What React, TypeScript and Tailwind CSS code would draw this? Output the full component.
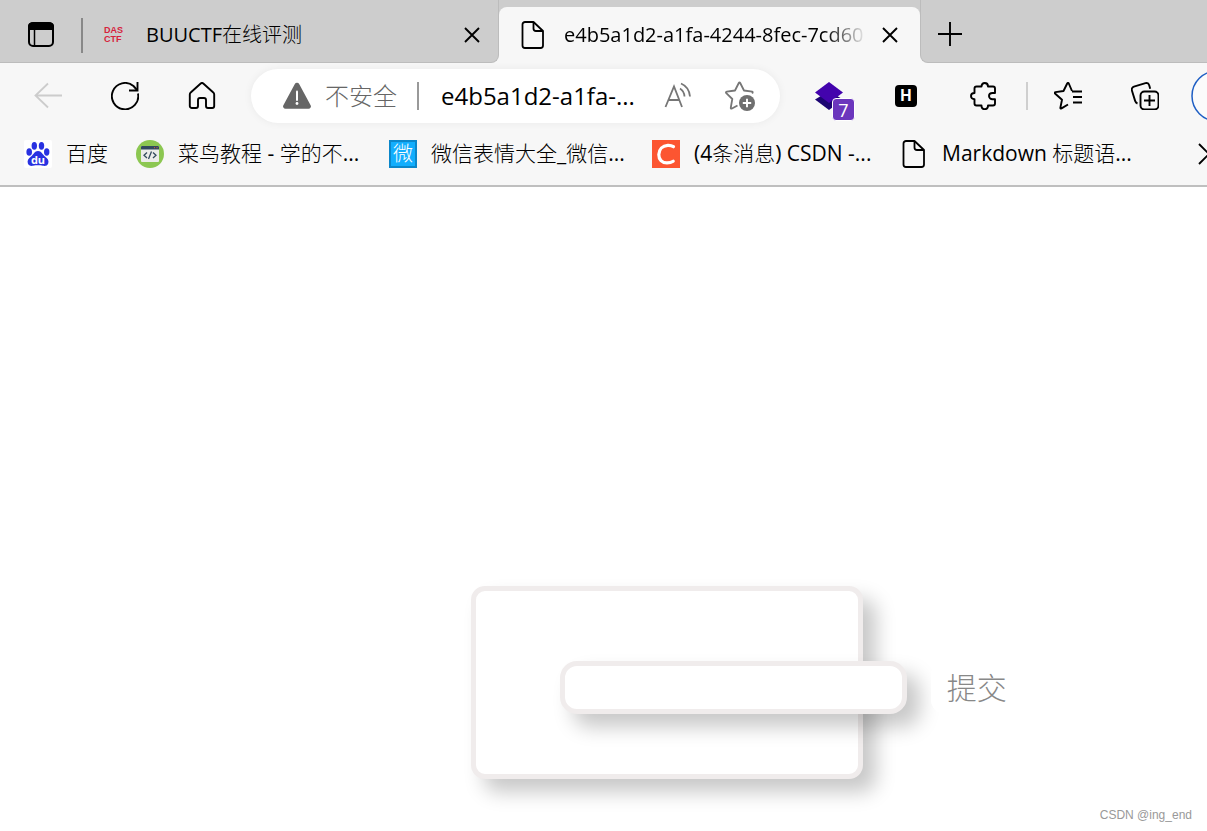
import React from 'react';

function TabActionsIcon() {
  return (
    <svg className="h-7 w-7" viewBox="0 0 28 28" fill="none">
      <rect x="2" y="2" width="24" height="23" rx="4" stroke="black" strokeWidth="2" />
      <path d="M1 9V5.500a4 4 0 0 1 4-4h18a4 4 0 0 1 4 4V9Z" fill="black" />
      <path d="M7.500 9v16" stroke="black" strokeWidth="1.500" />
    </svg>
  );
}

function PageIcon() {
  return (
    <svg className="h-7 w-7 shrink-0" viewBox="0 0 28 28" fill="none" stroke="black" strokeWidth="1.800" strokeLinejoin="round">
      <path d="M6 1h8.500L24 10v14.500a2.500 2.500 0 0 1-2.500 2.500h-15.500a2.500 2.500 0 0 1-2.500-2.500V3.500A2.500 2.500 0 0 1 6 1Z" />
      <path d="M14.500 1v6.500a2.500 2.500 0 0 0 2.500 2.500h7" />
    </svg>
  );
}

function CloseIcon() {
  return (
    <svg className="h-4 w-4" viewBox="0 0 16 16" stroke="black" strokeWidth="1.900">
      <path d="M1 1l14 14M15 1L1 15" />
    </svg>
  );
}

function BackIcon() {
  return (
    <svg className="h-7 w-7" viewBox="0 0 28 28" fill="none" stroke="#cccccc" strokeWidth="1.800">
      <path d="M14 1.500L1.500 13.500 14 25.500M1.500 13.500H28" />
    </svg>
  );
}

function ReloadIcon() {
  return (
    <svg className="h-7 w-7" viewBox="0 0 28 28" fill="none" stroke="black" strokeWidth="1.900">
      <path d="M27 11.500A13.200 13.200 0 1 1 22.500 4L26 8" />
      <path d="M26.500 0v8.500H18" />
    </svg>
  );
}

function HomeIcon() {
  return (
    <svg className="h-7 w-7" viewBox="0 0 28 28" fill="none" stroke="black" strokeWidth="1.900" strokeLinejoin="round">
      <path d="M12.700 1.500a2 2 0 0 1 2.600 0l10 9a2.500 2.500 0 0 1 .9 1.900V24a2 2 0 0 1-2 2H20a2 2 0 0 1-2-2v-6a2 2 0 0 0-2-2h-4a2 2 0 0 0-2 2v6a2 2 0 0 1-2 2H3.800a2 2 0 0 1-2-2V12.400a2.500 2.500 0 0 1 .9-1.900Z" />
    </svg>
  );
}

function WarningIcon() {
  return (
    <svg className="h-7 w-7 shrink-0" viewBox="0 0 28 28">
      <path d="M11.700 2.200a2.600 2.600 0 0 1 4.600 0l11.300 21a2.400 2.400 0 0 1-2.100 3.600h-23a2.400 2.400 0 0 1-2.100-3.600Z" fill="#666666" />
      <path d="M14 9.500v8.500" stroke="white" strokeWidth="2" strokeLinecap="round" />
      <circle cx="14" cy="21.500" r="1.400" fill="white" />
    </svg>
  );
}

function ReadAloudIcon() {
  return (
    <svg className="h-7 w-7" viewBox="0 0 28 28" fill="none" stroke="#767676" strokeWidth="1.800">
      <path d="M1.500 25L10 4.500 18 25M4.500 18h11" />
      <path d="M16 6.500c2.800 1.800 4.300 4.200 4.500 8" />
      <path d="M17 1.500c5.300 2.300 8.500 7 9 13" />
    </svg>
  );
}

function AddFavoriteIcon() {
  return (
    <svg className="h-8 w-8" viewBox="0 0 32 32" fill="none">
      <path
        d="M13.500 25.500L8 28.500q-1.500.7-1.200-1l1.500-8.500-6-5.800q-1-1.200.5-1.500l8.200-1.200L14.800 3q.7-1.300 1.400 0L20 10.500l8.200 1.200q1 .3 0 1.800"
        stroke="#767676"
        strokeWidth="1.800"
        strokeLinejoin="round"
      />
      <circle cx="23" cy="23" r="8" fill="#6f6f6f" />
      <path d="M23 18.800v8.400M18.800 23h8.400" stroke="white" strokeWidth="1.900" />
    </svg>
  );
}

function LayersIcon() {
  return (
    <svg className="h-7 w-7" viewBox="0 0 28 28">
      <path d="M0 17.500L14 9l14 8.500L14 28Z" fill="#1c0473" />
      <path d="M14 0l14 10.500L14 21 0 10.500Z" fill="#4303ad" />
    </svg>
  );
}

function PuzzleIcon() {
  return (
    <svg className="h-7 w-7" viewBox="0 0 28 28" fill="none" stroke="black" strokeWidth="1.900" strokeLinejoin="round">
      <path d="M6.500 4.500h5c0-2 1.200-3.500 3.200-3.500s3.300 1.500 3.300 3.500h5a2 2 0 0 1 2 2V11h-2.500c-2 0-3.500 1.300-3.500 3s1.500 3.200 3.500 3.200H25v4.300a2 2 0 0 1-2 2h-5c0 2.200-1.300 3.700-3.300 3.700s-3.200-1.500-3.200-3.700h-5a2 2 0 0 1-2-2v-4.300C2.400 17.200 1 16 1 14s1.400-3 3.500-3V6.500a2 2 0 0 1 2-2Z" />
    </svg>
  );
}

function FavoritesIcon() {
  return (
    <svg className="h-7 w-7" viewBox="0 0 28 28" fill="none" stroke="black" strokeWidth="1.900" strokeLinejoin="round">
      <path d="M14 22.500l-6.500 3.900q-1.300.6-1.100-.8l1.600-7.900L1 11.500q-.8-1.100.5-1.400l8-1.100 3.700-7.500q.8-1.200 1.600 0L18 9" />
      <path d="M18 9.500h10M19 15H28M19 20.500H28" />
    </svg>
  );
}

function CollectionsIcon() {
  return (
    <svg className="h-7 w-7" viewBox="0 0 28 28" fill="none" stroke="black" strokeWidth="1.900">
      <rect x="9.500" y="9.500" width="18" height="18" rx="4" />
      <path d="M18.500 13v11M13 18.500h11" />
      <path d="M6.500 21.500a3.500 3.500 0 0 1-2.300-2.400L.9 8.500a3 3 0 0 1 2-3.800L14.500 1.200a3 3 0 0 1 3.700 2l1 3.500" />
    </svg>
  );
}

function BaiduIcon() {
  return (
    <svg className="h-7 w-7 shrink-0" viewBox="0 0 28 28">
      <rect width="28" height="28" rx="2" fill="white" />
      <g fill="#2932e1">
        <ellipse cx="5.200" cy="12" rx="2.800" ry="3.800" />
        <ellipse cx="10.300" cy="5.800" rx="2.700" ry="3.900" />
        <ellipse cx="17.500" cy="5.800" rx="2.700" ry="3.900" />
        <ellipse cx="22.700" cy="12" rx="2.700" ry="3.700" />
        <path d="M14 11c3.500 0 4.500 3.500 7 5.600 2.600 2.200 4.100 3.800 3.300 6.600-.8 2.600-3 3-5.300 2.600-3.400-.6-6.600-.6-10 0-2.300.4-4.500-.2-5.200-2.600-.8-2.900.7-4.400 3.200-6.600C9.500 14.500 10.500 11 14 11Z" />
      </g>
      <text x="14" y="23.500" textAnchor="middle" fontSize="11" fontWeight="700" fontFamily="Open Sans, sans-serif" fill="white">du</text>
    </svg>
  );
}

function RunoobIcon() {
  return (
    <svg className="h-7 w-7 shrink-0" viewBox="0 0 28 28">
      <circle cx="14" cy="14" r="14" fill="#8cc751" />
      <rect x="5" y="6" width="18" height="16" rx="1" fill="#ececea" />
      <path d="M5 9.500V7a1 1 0 0 1 1-1h16a1 1 0 0 1 1 1v2.500Z" fill="#324a5e" />
      <path d="M18 7.700h1M20.500 7.700h1" stroke="#e9573e" />
      <path d="M11 12.500l-3 2.800 3 2.800M17 12.500l3 2.800-3 2.800M15.500 11.500l-3 7.500" stroke="#324a5e" strokeWidth="1.300" fill="none" />
    </svg>
  );
}

function WeiIcon() {
  return (
    <span className="flex h-7 w-7 shrink-0 items-center justify-center border-2 border-[#0b87ca] bg-[#12aefd] text-xl text-white">
      微
    </span>
  );
}

function CsdnIcon() {
  return (
    <svg className="h-7 w-7 shrink-0" viewBox="0 0 28 28">
      <rect width="28" height="28" fill="#fc5531" />
      <path d="M21.500 6.700c-2-1.300-3.800-1.500-5.700-1.400C10.500 5.600 7 9.300 6.800 14.500 6.700 19.500 10 22.900 15 22.900c2.400 0 4.300-.4 6.200-1.700" stroke="white" strokeWidth="3.200" strokeLinecap="round" fill="none" />
    </svg>
  );
}

function Bookmark({ icon, title, width }: { icon: React.ReactNode; title: string; width: string }) {
  return (
    <a href="#" className="flex shrink-0 items-center gap-3.5">
      {icon}
      <span className={`whitespace-nowrap ${width}`}>{title}</span>
    </a>
  );
}

export default function App() {
  const bookmarks = [
    { icon: <BaiduIcon />, title: '百度', width: 'w-[42px]' },
    { icon: <RunoobIcon />, title: '菜鸟教程 - 学的不...', width: 'w-[183px]' },
    { icon: <WeiIcon />, title: '微信表情大全_微信...', width: 'w-[193px]' },
    { icon: <CsdnIcon />, title: '(4条消息) CSDN -...', width: 'w-[178px]' },
    { icon: <PageIcon />, title: 'Markdown 标题语...', width: 'w-[183px]' },
  ];

  return (
    <div className="relative flex min-h-screen flex-col overflow-hidden bg-white font-['Open_Sans','Noto_Sans_CJK_SC_Light','Noto_Sans_CJK_SC',sans-serif] text-black">
      <header className="border-b-2 border-[#bfbfbf] bg-[#f7f7f7]">
        {/* Tab strip */}
        <div className="flex h-[63px] text-xl">
          <div className="flex w-[499px] shrink-0 items-center rounded-br-lg border-r border-b border-[#bcbcbc] bg-[#cdcdcd] pr-[18px] pb-1 pl-[27px] pt-3">
            <button aria-label="Tab actions"><TabActionsIcon /></button>
            <div className="ml-[26px] h-[35px] w-0.5 bg-[#888888]" />
            <div className="ml-[21px] flex flex-1 items-center gap-5">
              <span className="flex w-[22px] flex-col font-['Liberation_Sans',sans-serif] text-[9px] leading-[9px] font-bold text-[#d6223c]">
                <span>DAS</span>
                <span>CTF</span>
              </span>
              <span className="whitespace-nowrap">BUUCTF在线评测</span>
            </div>
            <button aria-label="Close tab"><CloseIcon /></button>
          </div>
          <div className="w-[421px] shrink-0 bg-[#cdcdcd] pt-[7px]">
            <div className="flex h-full items-center rounded-t-lg bg-[#f7f7f7] pr-[22px] pl-5">
              <PageIcon />
              <span className="ml-[17px] flex-1 whitespace-nowrap [mask-image:linear-gradient(to_right,black_86%,transparent)]">
                e4b5a1d2-a1fa-4244-8fec-7cd60
              </span>
              <button aria-label="Close tab" className="ml-[15px]"><CloseIcon /></button>
            </div>
          </div>
          <div className="flex flex-1 items-center rounded-bl-lg border-b border-l border-[#bcbcbc] bg-[#cdcdcd] pt-1.5 pl-4">
            <button aria-label="New tab">
              <svg className="h-[26px] w-[26px]" viewBox="0 0 26 26" stroke="black" strokeWidth="1.900">
                <path d="M13 1v24M1 13h24" />
              </svg>
            </button>
          </div>
        </div>

        {/* Toolbar */}
        <div className="flex h-[66px] items-center">
          <div className="flex shrink-0 items-center gap-[49px] pr-[35px] pl-[34px]">
            <button aria-label="Back"><BackIcon /></button>
            <button aria-label="Reload"><ReloadIcon /></button>
            <button aria-label="Home"><HomeIcon /></button>
          </div>
          <div className="flex h-[54px] min-w-0 flex-1 items-center rounded-full bg-white pr-6 pl-8 text-2xl shadow-[0_0_8px_rgba(0,0,0,0.06)]">
            <WarningIcon />
            <span className="ml-3.5 shrink-0 text-[#666666]">不安全</span>
            <div className="mr-[22px] ml-5 h-7 w-0.5 shrink-0 bg-[#999999]" />
            <input
              aria-label="Address"
              className="min-w-0 flex-1 bg-transparent outline-none"
              defaultValue="e4b5a1d2-a1fa-..."
            />
            <button aria-label="Read aloud" className="ml-4"><ReadAloudIcon /></button>
            <button aria-label="Add to favorites" className="ml-8"><AddFavoriteIcon /></button>
          </div>
          <div className="flex shrink-0 items-center pl-[35px]">
            <button aria-label="Layers" className="relative">
              <LayersIcon />
              <span className="absolute top-4 left-[17px] flex h-[23px] w-[23px] items-center justify-center rounded-sm border border-white bg-[#6b36bd] text-lg text-white">
                7
              </span>
            </button>
            <button aria-label="Extension" className="ml-[52px] flex h-[22px] w-[22px] items-center justify-center rounded-sm bg-black font-['Roboto',sans-serif] text-base font-bold text-white">
              H
            </button>
            <button aria-label="Extensions" className="ml-[53px]"><PuzzleIcon /></button>
            <div className="mr-[26px] ml-7 h-7 w-0.5 bg-[#cfcfcf]" />
            <button aria-label="Favorites"><FavoritesIcon /></button>
            <button aria-label="Collections" className="ml-[49px]"><CollectionsIcon /></button>
            <button aria-label="Profile" className="ml-8 w-4 overflow-hidden">
              <svg className="h-[52px] w-[52px] max-w-none" viewBox="0 0 52 52">
                <circle cx="26" cy="26" r="25" fill="#fbfbfb" stroke="#1f5fc4" strokeWidth="1.500" />
              </svg>
            </button>
          </div>
        </div>

        {/* Bookmarks bar */}
        <nav className="flex h-14 items-center pb-1.5 pl-6 text-[21px]">
          <div className="flex flex-1 gap-7">
            {bookmarks.map((bookmark) => (
              <Bookmark key={bookmark.title} {...bookmark} />
            ))}
          </div>
          <button aria-label="More bookmarks" className="w-2.5 shrink-0 overflow-hidden">
            <svg className="h-6 w-3.5 max-w-none" viewBox="0 0 14 24" fill="none" stroke="black" strokeWidth="1.900">
              <path d="M2 2l10 10L2 22" />
            </svg>
          </button>
        </nav>
      </header>

      <main className="flex flex-1 flex-col justify-end pb-[52px] pl-[39%]">
        <form className="flex h-[193px] w-[392px] items-center rounded-[14px] border-5 border-[#f0ecec] bg-white pt-2.5 pl-[84px] shadow-[13px_13px_20px_rgba(0,0,0,0.22)]">
          <input
            aria-label="Command"
            type="text"
            className="h-[53px] w-[347px] shrink-0 rounded-[17px] border-5 border-[#f0ecec] bg-white px-3 text-2xl shadow-[13px_13px_20px_rgba(0,0,0,0.22)] outline-none"
          />
          <button type="button" className="ml-6 h-[53px] shrink-0 rounded-[14px] bg-white px-4 text-3xl text-[#888888]">
            提交
          </button>
        </form>
      </main>

      <div className="absolute right-[15px] bottom-2 font-['Liberation_Sans',sans-serif] text-xs text-[#999999]">
        CSDN @ing_end
      </div>
    </div>
  );
}
